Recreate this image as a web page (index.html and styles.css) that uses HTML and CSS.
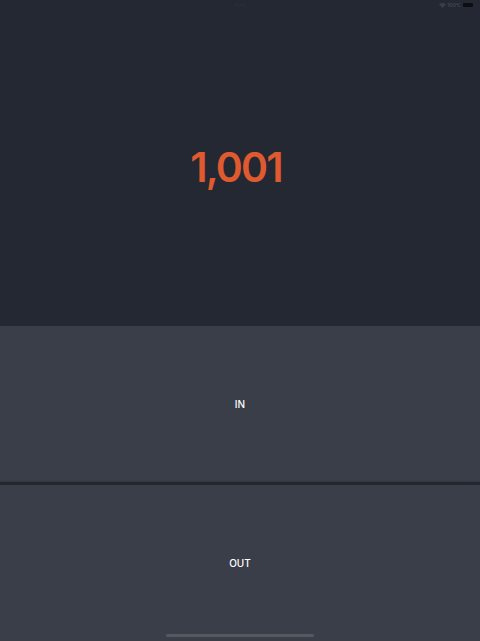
FILE: index.html
```html
<!DOCTYPE html>
<html>
<head>
<meta charset="utf-8">
<link rel="stylesheet" href="styles.css">
</head>
<body>
<div class="app">
  <div class="status">
    <span class="time">9:41</span>
    <div class="right">
      <svg class="wifi" width="7" height="5" viewBox="0 0 14 10"><path d="M7 10 L0 3 A10 10 0 0 1 14 3 Z" fill="#3a3e46"/></svg>
      <span class="pct">100%</span>
      <span class="battery"></span>
    </div>
  </div>
  <div class="counter"><span class="count">1,001</span></div>
  <div class="btn">IN</div>
  <div class="divider"></div>
  <div class="btn">OUT</div>
  <div class="home"></div>
</div>
</body>
</html>
```
FILE: styles.css
```css
html, body {
  margin: 0;
  padding: 0;
}
body {
  width: 480px;
  height: 641px;
  overflow: hidden;
  background: #3a3e48;
  font-family: Inter, "Noto Sans", sans-serif;
}
.app {
  position: relative;
  display: flex;
  flex-direction: column;
  height: 641px;
}
.status {
  position: absolute;
  top: 0;
  left: 0;
  right: 0;
  height: 10px;
  display: flex;
  justify-content: center;
  align-items: center;
}
.time {
  font-size: 5px;
  color: #2a303b;
  font-weight: 600;
}
.right {
  position: absolute;
  right: 7px;
  top: 2px;
  display: flex;
  align-items: center;
  gap: 2px;
  height: 6px;
}
.pct {
  font-size: 5px;
  color: #4a4f57;
  font-weight: 500;
  line-height: 6px;
}
.battery {
  width: 10px;
  height: 4px;
  background: #0c0e12;
  border-radius: 1px;
}
.counter {
  height: 326px;
  background: #232833;
  display: flex;
  align-items: center;
  justify-content: center;
}
.count {
  color: #e05a2f;
  font-size: 41px;
  font-weight: 600;
  letter-spacing: -1.8px;
  margin-top: 8px;
  margin-right: 8px;
}
.btn {
  height: 156px;
  background: #3a3e48;
  color: #ffffff;
  display: flex;
  align-items: center;
  justify-content: center;
  font-size: 10px;
  font-weight: 500;
}
.divider {
  height: 3px;
  background: #23272f;
  box-shadow: 0 0 2px rgba(0,0,0,0.35);
}
.home {
  position: absolute;
  left: 166px;
  width: 148px;
  top: 634px;
  height: 3px;
  border-radius: 2px;
  background: #55585d;
}
```
